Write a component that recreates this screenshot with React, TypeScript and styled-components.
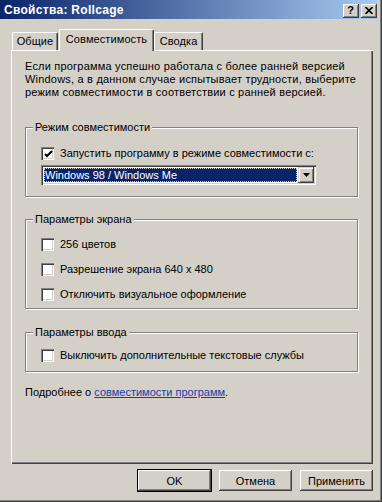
import React from 'react';
import styled, { createGlobalStyle } from 'styled-components';

const GlobalStyle = createGlobalStyle`
   html, body {
      margin: 0;
      padding: 0;
      background: #d4d0c8;
   }
   body {
      font-family: 'Liberation Sans', Arial, sans-serif;
      font-size: 11px;
      color: #000;
   }
`;

function CheckBox({ checked }: { checked?: boolean }) {
   return (
      <Box>
         {checked && (
            <svg width="9" height="9" viewBox="0 0 9 9">
               <path d="M1 4 L3 6 L8 1" stroke="#000" strokeWidth="2" fill="none" />
            </svg>
         )}
      </Box>
   );
}

function App() {
   return (
      <Window>
         <GlobalStyle />
         <TitleBar>
            <Title>Свойства: Rollcage</Title>
            <Caps>
               <CapButton>?</CapButton>
               <CapButton>
                  <svg width="8" height="7" viewBox="0 0 8 7">
                     <path d="M0.5 0 L7.5 7 M7.5 0 L0.5 7" stroke="#000" strokeWidth="1.6" />
                  </svg>
               </CapButton>
            </Caps>
         </TitleBar>
         <TabRow>
            <Tab $w={46}>Общие</Tab>
            <Tab $w={95} $active>
               Совместимость
            </Tab>
            <Tab $w={49}>Сводка</Tab>
         </TabRow>
         <Panel>
            <Intro>
               Если программа успешно работала с более ранней версией Windows, а в данном случае
               испытывает трудности, выберите режим совместимости в соответствии с ранней версией.
            </Intro>
            <Group $mt={22} $pt={13} $pb={11}>
               <Legend>Режим совместимости</Legend>
               <Row>
                  <CheckBox checked />
                  <Label>Запустить программу в режиме совместимости с:</Label>
               </Row>
               <Combo>
                  <ComboValue>
                     <Selected>Windows 98 / Windows Me</Selected>
                  </ComboValue>
                  <DropButton>
                     <svg width="7" height="4" viewBox="0 0 7 4">
                        <path d="M0 0 H7 L3.5 4 Z" fill="#000" />
                     </svg>
                  </DropButton>
               </Combo>
            </Group>
            <Group $mt={16} $pt={12} $pb={7} $gap={12}>
               <Legend>Параметры экрана</Legend>
               <Row>
                  <CheckBox />
                  <Label>256 цветов</Label>
               </Row>
               <Row>
                  <CheckBox />
                  <Label>Разрешение экрана 640 x 480</Label>
               </Row>
               <Row>
                  <CheckBox />
                  <Label>Отключить визуальное оформление</Label>
               </Row>
            </Group>
            <Group $mt={17} $pt={10} $pb={9}>
               <Legend>Параметры ввода</Legend>
               <Row>
                  <CheckBox />
                  <Label>Выключить дополнительные текстовые службы</Label>
               </Row>
            </Group>
            <More>
               Подробнее о <Link>совместимости программ</Link>.
            </More>
         </Panel>
         <Buttons>
            <Button $default>OK</Button>
            <Button>Отмена</Button>
            <Button>Применить</Button>
         </Buttons>
      </Window>
   );
}

export default App;

const Window = styled.div`
   width: 382px;
   height: 502px;
   box-sizing: border-box;
   padding: 0 5px 0 0;
   background: #d4d0c8;
   box-shadow: inset -1px -1px 0 #404040, inset -2px -2px 0 #808080;
   display: flex;
   flex-direction: column;
`;
const TitleBar = styled.div`
   height: 19px;
   display: flex;
   align-items: center;
   justify-content: space-between;
   padding: 0 0 0 4px;
   background: linear-gradient(to right, #0a246a, #a6caf0);
`;
const Title = styled.span`
   color: #fff;
   font-weight: bold;
   font-size: 12px;
   letter-spacing: 0.3px;
`;
const Caps = styled.div`
   display: flex;
   gap: 2px;
   align-items: center;
   margin-top: 2px;
`;
const CapButton = styled.div`
   width: 16px;
   height: 14px;
   box-sizing: border-box;
   background: #d4d0c8;
   box-shadow: inset -1px -1px 0 #404040, inset 1px 1px 0 #fff, inset -2px -2px 0 #808080;
   display: flex;
   align-items: center;
   justify-content: center;
   font-weight: bold;
   font-size: 11px;
   line-height: 1;
   padding: 0 1px 1px 0;
`;
const TabRow = styled.div`
   display: flex;
   align-items: flex-end;
   height: 22px;
   margin: 10px 0 -1px 12px;
   position: relative;
   z-index: 1;
`;
const Tab = styled.div<{ $w: number; $active?: boolean }>`
   width: ${(p) => p.$w}px;
   height: ${(p) => (p.$active ? 22 : 18)}px;
   margin-bottom: ${(p) => (p.$active ? 0 : 1)}px;
   margin-left: ${(p) => (p.$active ? 1 : 0)}px;
   box-sizing: border-box;
   background: #d4d0c8;
   border-top: 1px solid #fff;
   border-left: 1px solid #fff;
   border-right: 1px solid #404040;
   border-radius: 2px 2px 0 0;
   box-shadow: inset -1px 0 0 #808080;
   display: flex;
   justify-content: center;
   padding-top: ${(p) => (p.$active ? 3 : 2)}px;
   font-size: 11px;
   letter-spacing: 0.1px;
`;
const Panel = styled.div`
   margin-left: 11px;
   width: 362px;
   height: 414px;
   box-sizing: border-box;
   padding: 10px 15px 0 14px;
   box-shadow: inset 1px 1px 0 #fff, inset -1px -1px 0 #404040, inset -2px -2px 0 #808080;
   display: flex;
   flex-direction: column;
`;
const Intro = styled.div`
   line-height: 13px;
   letter-spacing: 0.2px;
`;
const Group = styled.fieldset<{ $mt: number; $pt: number; $pb: number; $gap?: number }>`
   margin: ${(p) => p.$mt}px 0 0 0;
   padding: ${(p) => p.$pt}px 0 ${(p) => p.$pb}px 15px;
   border: 1px solid #808080;
   box-shadow: inset 1px 1px 0 #fff, 1px 1px 0 #fff;
   display: flex;
   flex-direction: column;
   gap: ${(p) => p.$gap ?? 0}px;
   min-width: 0;
`;
const Legend = styled.legend`
   margin-left: -8px;
   padding: 0 2px;
   line-height: 13px;
   background: #d4d0c8;
`;
const Row = styled.div`
   display: flex;
   align-items: center;
   height: 13px;
   gap: 6px;
`;
const Box = styled.div`
   width: 13px;
   height: 13px;
   box-sizing: border-box;
   background: #fff;
   box-shadow: inset 1px 1px 0 #808080, inset 2px 2px 0 #404040, inset -1px -1px 0 #fff,
      inset -2px -2px 0 #d4d0c8;
   display: flex;
   align-items: center;
   justify-content: center;
   padding: 1px 0 0 1px;
`;
const Label = styled.span`
   line-height: 13px;
`;
const Combo = styled.div`
   margin-top: 5px;
   width: 275px;
   height: 20px;
   box-sizing: border-box;
   background: #fff;
   padding: 2px;
   box-shadow: inset 1px 1px 0 #808080, inset 2px 2px 0 #404040, inset -1px -1px 0 #fff,
      inset -2px -2px 0 #d4d0c8;
   display: flex;
`;
const ComboValue = styled.div`
   flex: 1;
   padding: 1px;
   display: flex;
`;
const Selected = styled.div`
   flex: 1;
   background: #0a246a;
   color: #fff;
   line-height: 14px;
   padding-left: 1px;
   outline: 1px dotted #d4d0c8;
   outline-offset: -1px;
`;
const DropButton = styled.div`
   width: 16px;
   box-sizing: border-box;
   background: #d4d0c8;
   box-shadow: inset -1px -1px 0 #404040, inset 1px 1px 0 #d4d0c8, inset 2px 2px 0 #fff,
      inset -2px -2px 0 #808080;
   display: flex;
   align-items: center;
   justify-content: center;
`;
const More = styled.div`
   margin-top: 14px;
   line-height: 13px;
`;
const Link = styled.span`
   color: #1c3aa9;
   text-decoration: underline;
`;
const Buttons = styled.div`
   display: flex;
   justify-content: flex-end;
   gap: 6px;
   margin-top: 5px;
   padding-right: 3px;
`;
const Button = styled.div<{ $default?: boolean }>`
   width: 75px;
   height: 23px;
   box-sizing: border-box;
   background: #d4d0c8;
   border: 1px solid ${(p) => (p.$default ? '#000' : 'transparent')};
   box-shadow: ${(p) =>
      p.$default
         ? 'inset -1px -1px 0 #404040, inset 1px 1px 0 #fff, inset -2px -2px 0 #808080'
         : 'inset -1px -1px 0 #404040, inset 1px 1px 0 #fff, inset -2px -2px 0 #808080, inset 2px 2px 0 #d4d0c8'};
   display: flex;
   align-items: center;
   justify-content: center;
   font-size: 11px;
`;
